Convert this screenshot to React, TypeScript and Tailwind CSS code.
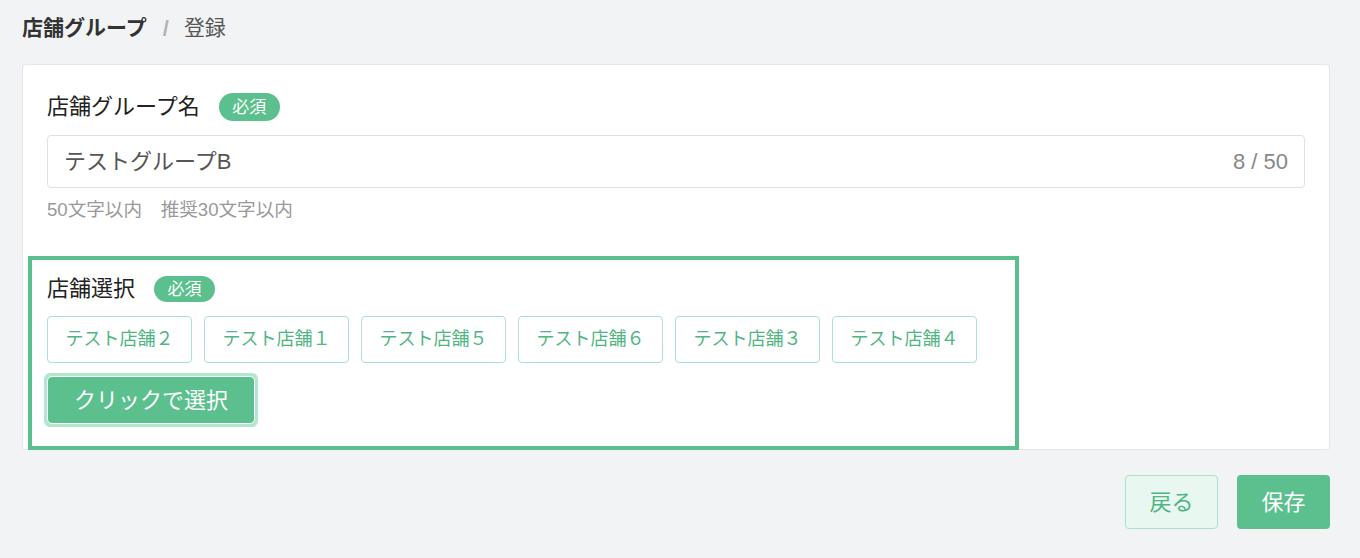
import React from "react";

const font = { fontFamily: '"Liberation Sans", "Noto Sans CJK JP", sans-serif' };

const stores = ["テスト店舗２", "テスト店舗１", "テスト店舗５", "テスト店舗６", "テスト店舗３", "テスト店舗４"];

function Badge({ small }: { small?: boolean }) {
  return (
    <span
      className={`ml-[19px] inline-flex items-center justify-center rounded-full bg-[#5bc08e] text-white text-[17px] leading-none ${
        small ? "h-[26px] w-[61px]" : "h-[28px] w-[61px]"
      }`}
    >
      必須
    </span>
  );
}

export default function App() {
  return (
    <div className="min-h-[558px] w-[1360px] bg-[#f2f3f5] text-[#222]" style={font}>
      <div className="flex h-[56px] items-center pl-[22px]">
        <span className="text-[21px] font-bold text-[#333]">店舗グループ</span>
        <span className="ml-[16px] text-[22px] font-bold text-[#b5b5b5]">/</span>
        <span className="ml-[15px] text-[21px] text-[#555]">登録</span>
      </div>
      <div className="ml-[22px] mt-[8px] w-[1308px] rounded-[4px] border border-[#e3e5e8] bg-white">
        <div className="px-[24px] pt-[28px]">
          <div className="flex h-[28px] items-center">
            <span className="text-[22px] leading-none">店舗グループ名</span>
            <Badge />
          </div>
          <div className="mt-[14px] flex h-[53px] items-center justify-between rounded-[4px] border border-[#dfe1e6] pl-[16px] pr-[16px]">
            <span className="text-[22px] text-[#555]">テストグループB</span>
            <span className="text-[22px] text-[#888]">8 / 50</span>
          </div>
          <div className="mt-[12px] h-[20px] text-[18.6px] leading-[20px] text-[#999]">
            50文字以内　推奨30文字以内
          </div>
        </div>
        <div className="ml-[5px] mt-[36px] mb-[-1px] w-[991px] border-[4px] border-[#5bbf8d] pl-[15px] pt-[16px] pb-[19px]">
          <div className="flex h-[26px] items-center">
            <span className="text-[22px] leading-none">店舗選択</span>
            <Badge small />
          </div>
          <div className="mt-[14px] flex gap-[12px]">
            {stores.map((s) => (
              <div
                key={s}
                className="flex h-[47px] w-[145px] items-center justify-center rounded-[4px] border border-[#a9e2c8] text-[18px] text-[#4fb582]"
              >
                {s}
              </div>
            ))}
          </div>
          <div className="mt-[10px] ml-[-3px] flex h-[54px] w-[214px] items-center justify-center rounded-[6px] bg-[#b4e6cf] p-[3px]">
            <div className="flex h-full w-full items-center justify-center rounded-[5px] border border-white bg-[#5bc08e] text-[22px] text-white">
              クリックで選択
            </div>
          </div>
        </div>
      </div>
      <div className="mt-[25px] flex justify-end gap-[19px] pr-[30px]">
        <div className="flex h-[54px] w-[93px] items-center justify-center rounded-[4px] border border-[#a9e2c8] bg-[#e8f7f0] text-[22px] text-[#4fb582]">
          戻る
        </div>
        <div className="flex h-[54px] w-[93px] items-center justify-center rounded-[4px] bg-[#5bc08e] text-[22px] text-white">
          保存
        </div>
      </div>
    </div>
  );
}
